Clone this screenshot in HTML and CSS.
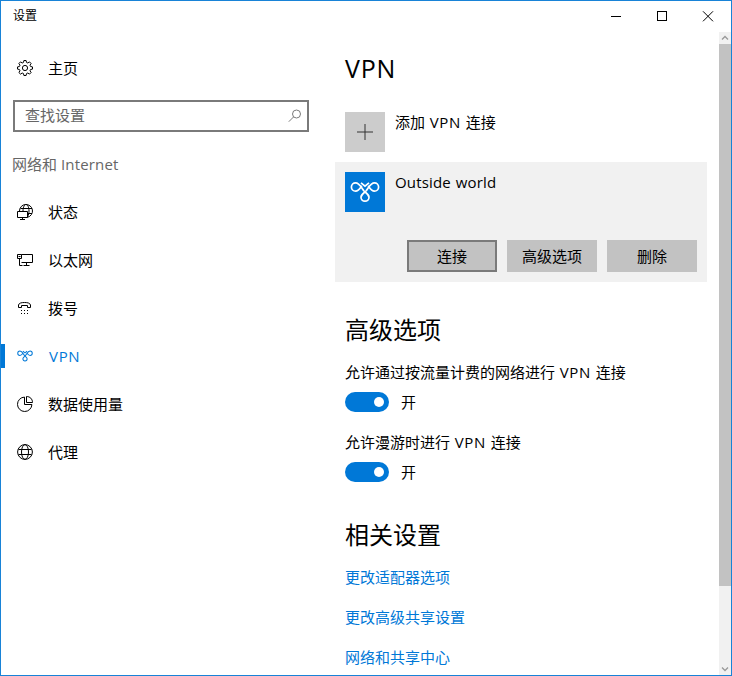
FILE: index.html
```html
<!DOCTYPE html>
<html lang="zh-CN">
<head>
<meta charset="utf-8">
<title>设置</title>
<link rel="stylesheet" href="styles.css">
</head>
<body>
<div class="window">
  <header class="titlebar">
    <span class="titlebar-text">设置</span>
    <div class="controls">
      <svg class="control" viewBox="0 0 46 30"><path d="M18 15.500h10" /></svg>
      <svg class="control" viewBox="0 0 46 30"><path d="M18.500 10.500h9v9h-9z" /></svg>
      <svg class="control smooth" viewBox="0 0 46 30"><path d="M18 10.300l10 10M28 10.300l-10 10" /></svg>
    </div>
  </header>
  <div class="body">
    <nav class="sidebar">
      <a class="nav-item">
        <svg class="icon" viewBox="0 0 16 16"><circle cx="8" cy="8" r="2.600"/><path d="M6.900 .5h2.200l.4 1.900 1.300.6 1.700-1.100 1.600 1.600L13 5.200l.6 1.300 1.900.4v2.200l-1.900.4-.6 1.300 1.100 1.700-1.600 1.600-1.700-1.100-1.300.6-.4 1.900H6.900l-.4-1.900-1.300-.6-1.700 1.100-1.600-1.600L3 10.800l-.6-1.300-1.900-.4V6.900l1.900-.4L3 5.200 1.900 3.500l1.600-1.600L5.200 3l1.300-.6z"/></svg>
        <span>主页</span>
      </a>
      <div class="search">
        <span>查找设置</span>
        <svg class="search-icon" viewBox="0 0 14 14"><circle cx="8.500" cy="5" r="4"/><path d="M5.600 7.900L.8 12.700"/></svg>
      </div>
      <h2 class="nav-title">网络和 <span class="wide">Internet</span></h2>
      <a class="nav-item">
        <svg class="icon" viewBox="0 0 16 16"><path d="M2.500 7A6.500 6.500 0 1 1 10.500 13.300M6 7C6 3 7.500.5 9 .5S12 3 12 7c0 2-.5 4-1.500 6M3.500 4.500h11.500M10.500 9.500h4.500M.5 7.500h10v6H.5zM5.500 13.500v2M3 15.500h5"/></svg>
        <span>状态</span>
      </a>
      <a class="nav-item">
        <svg class="icon" viewBox="0 0 16 16"><path d="M4.500 2.500h11v8h-11M.5 2.500h4v4h-4zM1.500 4.500h2M2.500 6.500v7h3M9.500 10.500v3M6.500 13.500h6"/></svg>
        <span>以太网</span>
      </a>
      <a class="nav-item">
        <svg class="icon" viewBox="0 0 16 16"><path d="M1.500 7.500V5C2 3 4.500 2.500 7.500 2.500s5.500.5 6 2.500v2.500h-3v-2h-6v2z"/><path class="dots" d="M4 10.500h8M4 13.500h8"/></svg>
        <span>拨号</span>
      </a>
      <a class="nav-item active">
        <svg class="icon" viewBox="5 9 30 22"><use href="#vpn"/></svg>
        <span class="vpn">VPN</span>
      </a>
      <a class="nav-item">
        <svg class="icon" viewBox="0 0 16 16"><path d="M7.500 1.100A7.200 7.200 0 1 0 14.900 8.500H7.500zM9.500.5v6h6C15.500 3 13 .5 9.500.5z"/></svg>
        <span>数据使用量</span>
      </a>
      <a class="nav-item">
        <svg class="icon" viewBox="0 0 16 16"><circle cx="8" cy="8" r="7.400"/><ellipse cx="8" cy="8" rx="3.500" ry="7.400"/><path d="M1.500 5.500h13M1.500 10.500h13"/></svg>
        <span>代理</span>
      </a>
    </nav>
    <main class="content">
      <h1 class="page-title">VPN</h1>
      <div class="add">
        <div class="tile tile-add"><svg viewBox="0 0 40 40"><path d="M12 20h16M20 12v16"/></svg></div>
        <span class="mixed">添加 <span class="vpn">VPN</span> 连接</span>
      </div>
      <section class="connection">
        <div class="connection-head">
          <div class="tile tile-vpn">
            <svg viewBox="0 0 40 40">
              <g id="vpn"><path d="M16 10.800l4 3.400 4-3.400M16.800 13.800C15 16.500 13.500 19.200 10.600 19.200A4.200 4.200 0 0 1 10.600 10.800C14.500 10.800 16.500 16 19 19C21 21 24 22.500 24 25.200A4 4 0 0 1 16 25.200C16 22.500 19 21 21 19C23.500 16 25.500 10.800 29.400 10.800A4.200 4.200 0 0 1 29.400 19.200C26.500 19.200 25 16.500 23.200 13.800"/></g>
            </svg>
          </div>
          <span class="mixed wide">Outside world</span>
        </div>
        <div class="actions">
          <button class="button focused">连接</button>
          <button class="button">高级选项</button>
          <button class="button">删除</button>
        </div>
      </section>
      <h2 class="section-title">高级选项</h2>
      <p class="label mixed">允许通过按流量计费的网络进行 <span class="vpn">VPN</span> 连接</p>
      <div class="toggle-row"><span class="toggle"></span><span>开</span></div>
      <p class="label mixed">允许漫游时进行 <span class="vpn">VPN</span> 连接</p>
      <div class="toggle-row"><span class="toggle"></span><span>开</span></div>
      <h2 class="section-title related">相关设置</h2>
      <a class="link">更改适配器选项</a>
      <a class="link">更改高级共享设置</a>
      <a class="link">网络和共享中心</a>
    </main>
    <div class="scrollbar">
      <svg class="arrow" viewBox="0 0 12 12"><path d="M3 7.500l3-3 3 3"/></svg>
      <div class="thumb"></div>
      <svg class="arrow" viewBox="0 0 12 12"><path d="M3 4.500l3 3 3-3"/></svg>
    </div>
  </div>
</div>
</body>
</html>
```
FILE: styles.css
```css
* { box-sizing: border-box; }
body {
  margin: 0;
  overflow: hidden;
  background: #fff;
  color: #000;
  font: 15px/20px "Open Sans", "Noto Sans CJK SC", sans-serif;
}
h1, h2, p { margin: 0; font-weight: 400; }
svg { display: block; fill: none; stroke: currentColor; }
.vpn { letter-spacing: .7px; }
.mixed { word-spacing: .8px; }
.wide { letter-spacing: .17px; }
.window {
  display: flex;
  flex-direction: column;
  width: 732px;
  height: 676px;
  border: 1px solid #1883d7;
  overflow: hidden;
}
.titlebar {
  display: flex;
  flex: 0 0 31px;
  justify-content: space-between;
  padding-left: 12px;
}
.titlebar-text { font-size: 12px; line-height: 30px; }
.controls { display: flex; }
.control { width: 46px; height: 30px; shape-rendering: crispEdges; }
.smooth { shape-rendering: auto; }
.body { display: flex; flex: 1; min-height: 0; }
.sidebar { flex: 0 0 334px; padding-top: 12px; }
.nav-item {
  display: flex;
  align-items: center;
  gap: 15px;
  height: 48px;
  padding-left: 16px;
}
.icon { width: 16px; height: 16px; }
.dots { stroke-dasharray: 1 2; }
.active { gap: 16px; color: #0078d7; position: relative; }
.active::before {
  content: "";
  position: absolute;
  left: 0;
  top: 12px;
  width: 4px;
  height: 24px;
  background: #0078d7;
}
.active .icon { stroke-width: 1.9; }
.search {
  display: flex;
  align-items: center;
  justify-content: space-between;
  width: 296px;
  height: 32px;
  margin: 8px 0 0 12px;
  padding: 0 5px 2px 10px;
  border: 2px solid #7a7a7a;
  color: #666;
}
.search-icon { width: 14px; height: 14px; margin-top: 2px; color: #7a7a7a; }
.nav-title {
  height: 56px;
  padding: 22px 0 0 11px;
  color: #666;
  font-size: 15px;
  line-height: 20px;
}
.content { flex: 1; min-width: 0; }
.page-title {
  margin: 20px 0 27px 10px;
  font-size: 25px;
  line-height: 33px;
  letter-spacing: .8px;
}
.add, .connection-head { display: flex; gap: 10px; }
.add { padding: 0 10px; margin-bottom: 10px; }
.tile { width: 40px; height: 40px; flex: none; }
.tile-add { background: #ccc; color: #333; }
.tile-vpn { background: #0078d7; color: #fff; }
.tile-vpn svg { stroke-width: 1.7; }
.connection {
  width: 372px;
  height: 120px;
  padding: 10px;
  background: #f1f1f1;
}
.actions {
  display: flex;
  justify-content: flex-end;
  gap: 10px;
  margin-top: 28px;
}
.button {
  width: 90px;
  height: 32px;
  padding: 0;
  border: 0;
  background: #c2c2c2;
  color: #000;
  font: inherit;
}
.focused { border: 2px solid #7a7a7a; }
.section-title {
  margin: 32px 0 16px 10px;
  font-size: 24px;
  line-height: 32px;
}
.label { margin-left: 10px; }
.toggle-row {
  display: flex;
  align-items: center;
  gap: 12px;
  height: 20px;
  margin: 10px 0 20px 10px;
}
.toggle {
  display: flex;
  align-items: center;
  justify-content: flex-end;
  width: 44px;
  height: 20px;
  padding-right: 5px;
  border-radius: 10px;
  background: #0078d7;
}
.toggle::before {
  content: "";
  width: 10px;
  height: 10px;
  border-radius: 50%;
  background: #fff;
}
.related { margin-top: 37px; margin-bottom: 16px; }
.link {
  display: block;
  margin: 0 0 20px 10px;
  color: #0078d7;
}
.scrollbar {
  display: flex;
  flex: 0 0 12px;
  flex-direction: column;
  background: #f1f1f1;
  color: #999;
}
.arrow { width: 12px; height: 12px; stroke-width: 1.3; }
.thumb { height: 542px; margin-bottom: auto; background: #c2c2c2; }
```
